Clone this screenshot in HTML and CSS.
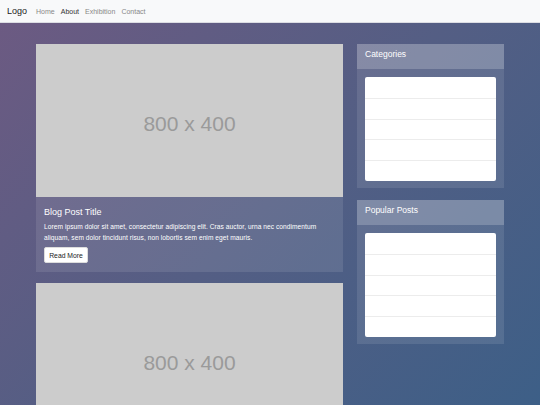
FILE: index.html
```html
<!DOCTYPE html>
<html>
<head>
<meta charset="utf-8">
<link rel="stylesheet" href="styles.css">
</head>
<body>
<nav class="navbar">
  <span class="brand">Logo</span>
  <a class="nav-link">Home</a>
  <a class="nav-link active">About</a>
  <a class="nav-link">Exhibition</a>
  <a class="nav-link">Contact</a>
</nav>
<div class="page">
  <div class="container">
    <main class="posts">
      <article class="post">
        <div class="thumb"><span>800 x 400</span></div>
        <div class="post-body">
          <h2 class="post-title">Blog Post Title</h2>
          <p class="post-text">Lorem ipsum dolor sit amet, consectetur adipiscing elit. Cras auctor, urna nec condimentum aliquam, sem dolor tincidunt risus, non lobortis sem enim eget mauris.</p>
          <button class="btn">Read More</button>
        </div>
      </article>
      <article class="post">
        <div class="thumb"><span>800 x 400</span></div>
      </article>
    </main>
    <aside class="sidebar">
      <section class="panel">
        <div class="panel-head">Categories</div>
        <ul class="list">
          <li></li><li></li><li></li><li></li><li></li>
        </ul>
      </section>
      <section class="panel">
        <div class="panel-head">Popular Posts</div>
        <ul class="list">
          <li></li><li></li><li></li><li></li><li></li>
        </ul>
      </section>
    </aside>
  </div>
</div>
</body>
</html>
```
FILE: styles.css
```css
* { box-sizing: border-box; }
html, body { margin: 0; padding: 0; height: 100%; overflow: hidden; }
body {
  font-family: "Liberation Sans", Arial, sans-serif;
  background: linear-gradient(135deg, #6d5a82 0%, #545e84 50%, #3d5f87 100%);
  background-attachment: fixed;
}
.navbar {
  height: 23px;
  background: #f8f9fa;
  border-bottom: 1px solid #dcdde3;
  display: flex;
  align-items: center;
  padding: 0 7px;
}
.brand { font-size: 9px; color: #222; margin-right: 9px; }
.nav-link { font-size: 7px; color: #888; margin-right: 6px; }
.nav-link.active { color: #333; }
.page { padding-top: 21px; }
.container {
  width: 468px;
  margin: 0 auto;
  display: grid;
  grid-template-columns: 307px 147px;
  column-gap: 14px;
  align-items: start;
}
.posts { display: flex; flex-direction: column; gap: 11px; }
.post { background: rgba(255,255,255,0.1); }
.thumb {
  height: 153px;
  background: #cccccc;
  color: #9a9a9a;
  font-size: 21px;
  display: flex;
  align-items: center;
  justify-content: center;
}
.thumb span { position: relative; top: 3px; }
.post-body { padding: 8px 8px 8px; height: 75px; }
.post-title { margin: 2px 0 5px; font-size: 9px; font-weight: normal; color: #fff; }
.post-text { margin: 0 0 4px; font-size: 6.6px; letter-spacing: 0.06px; line-height: 10.7px; color: #fff; }
.btn {
  display: block;
  width: 44px; height: 16px;
  padding: 0;
  background: #fff;
  border: 1px solid #ddd;
  border-radius: 2px;
  font-family: inherit;
  font-size: 6.8px;
  color: #222;
}
.sidebar { display: flex; flex-direction: column; gap: 12px; }
.panel { background: rgba(255,255,255,0.1); padding-bottom: 7px; }
.panel-head {
  height: 25px;
  padding: 5px 8px 0;
  font-size: 8.5px;
  color: #fff;
  background: rgba(255,255,255,0.2);
}
.list {
  list-style: none;
  margin: 8px 8px 0;
  padding: 0;
  background: #fff;
  border-radius: 2px;
}
.list li { height: 20.8px; border-top: 1px solid #ececec; }
.list li:first-child { border-top: none; }
```
